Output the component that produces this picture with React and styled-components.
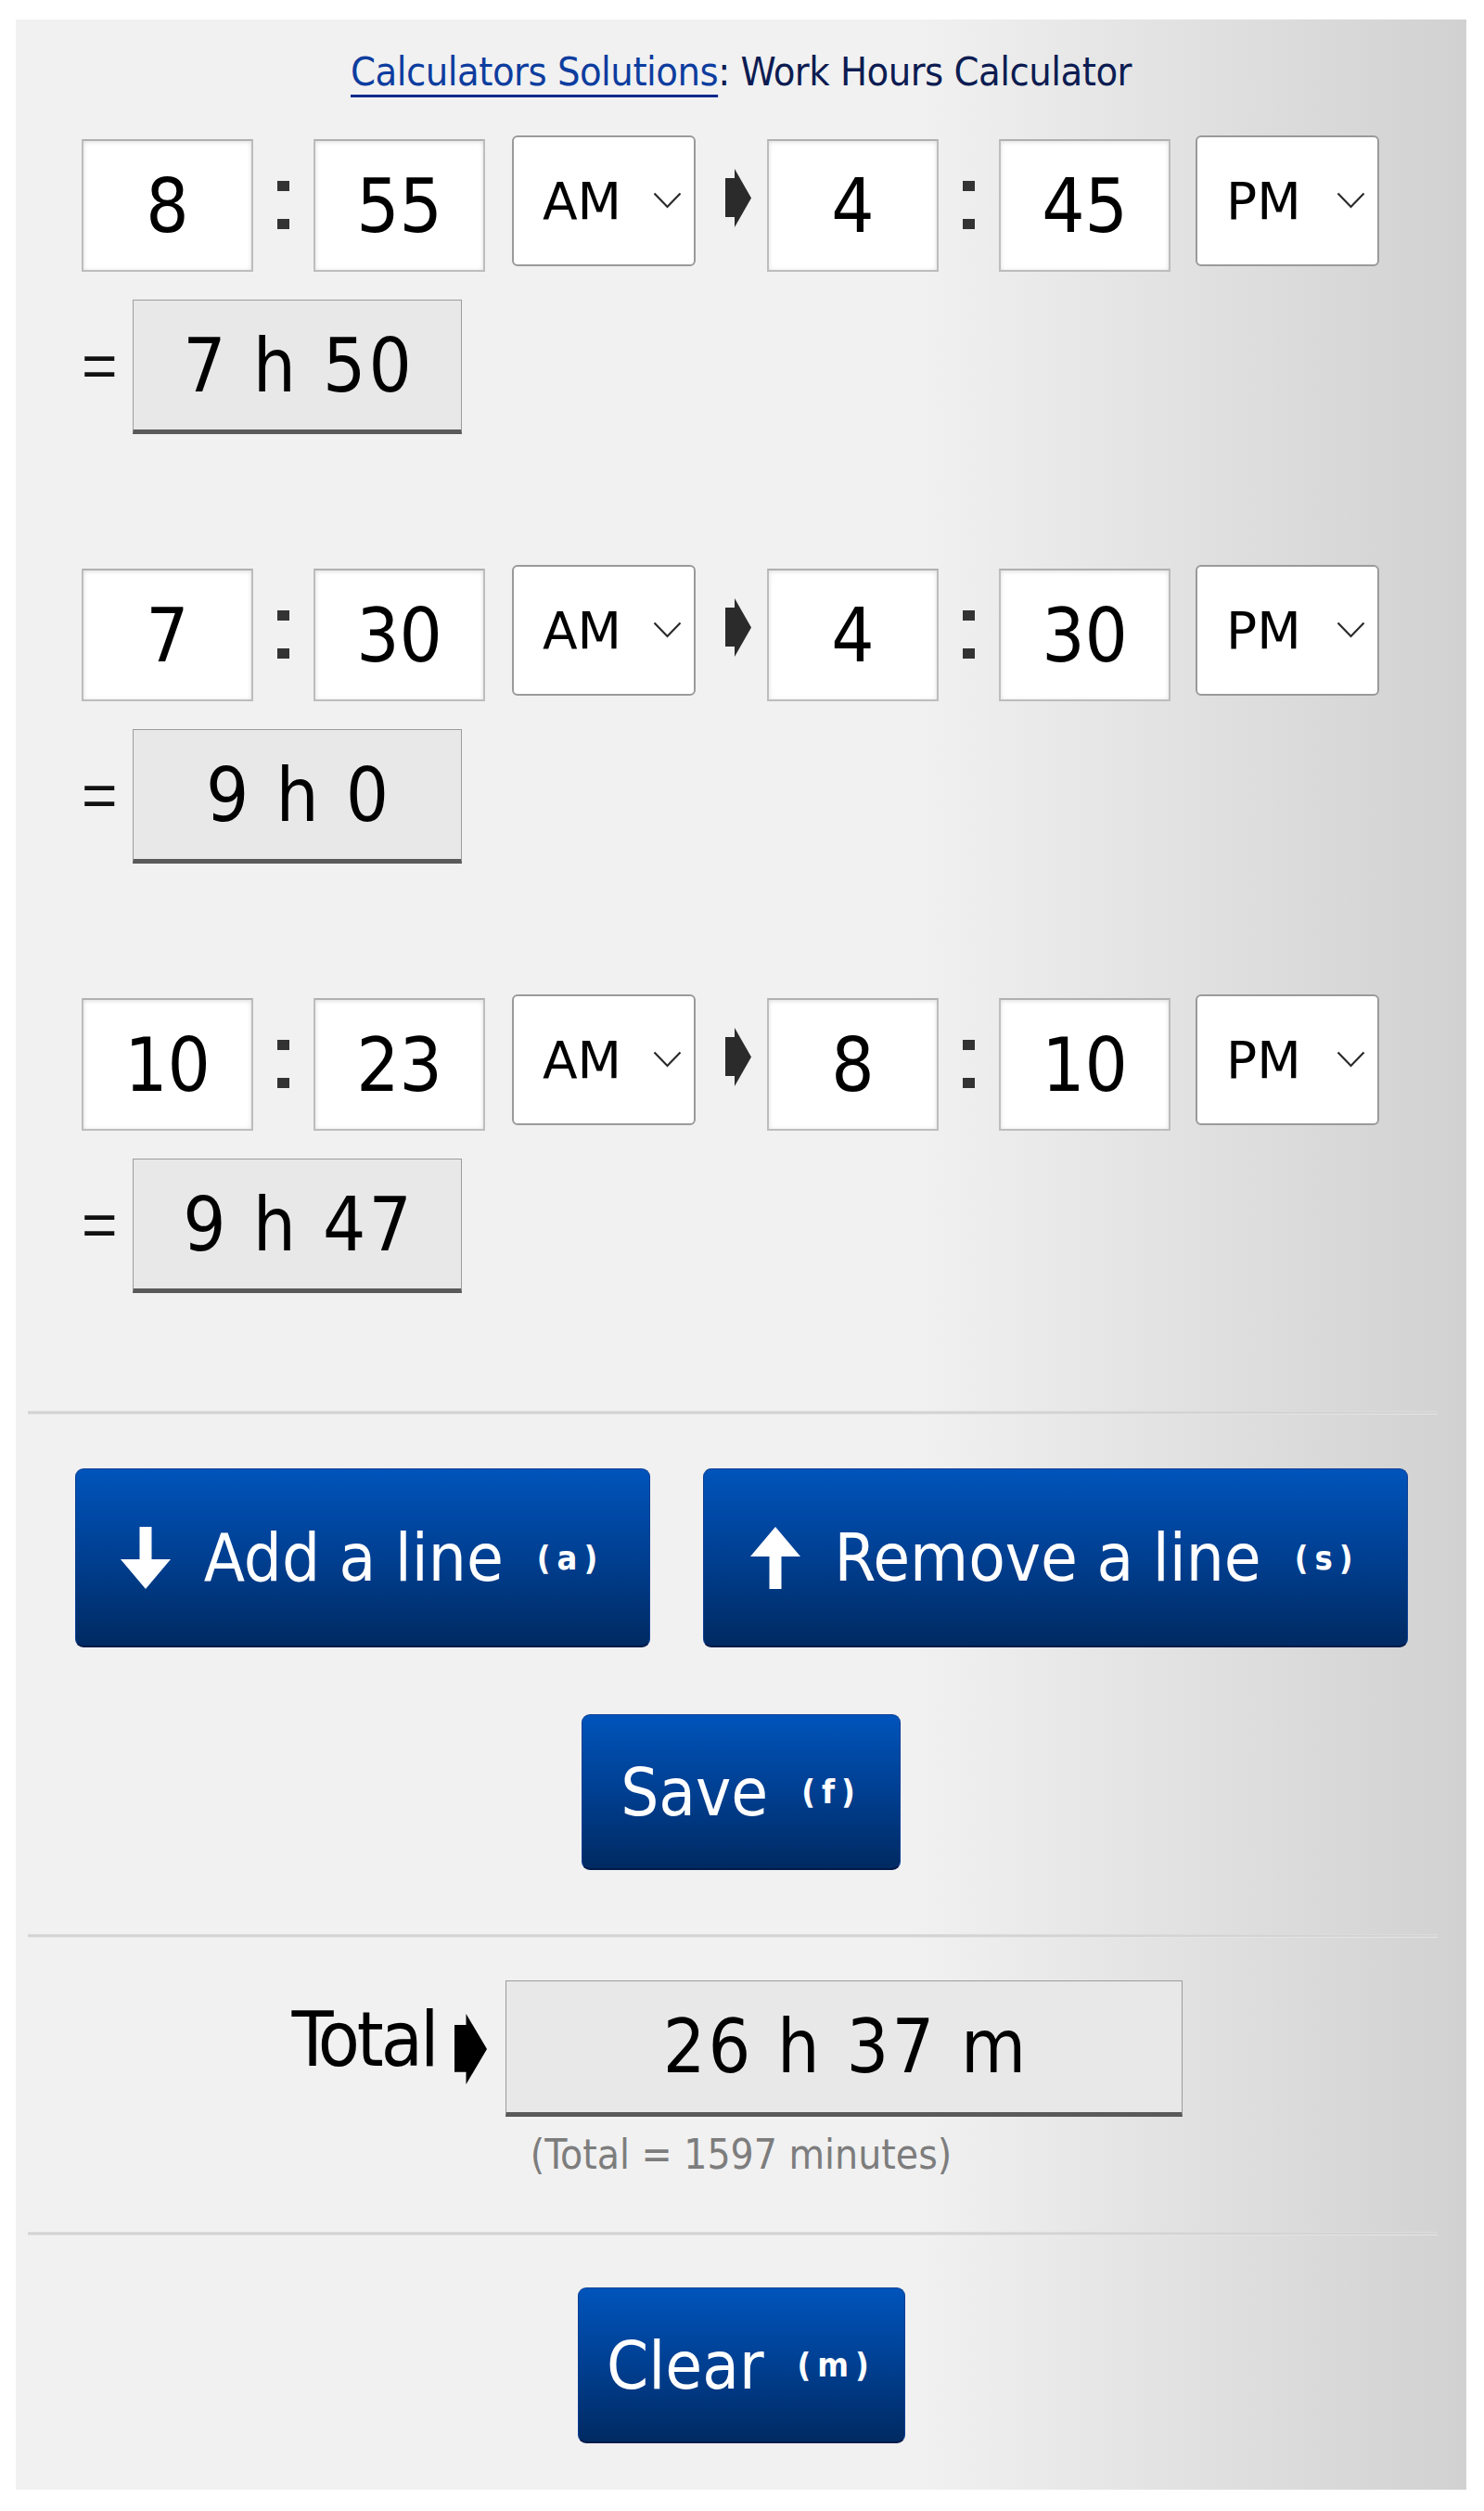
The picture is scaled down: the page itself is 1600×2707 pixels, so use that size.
import styled, { createGlobalStyle } from 'styled-components';

const techno = `"DejaVu Sans Condensed", "Liberation Sans", sans-serif`;

const GlobalStyle = createGlobalStyle`
    html, body {
        margin: 0;
        padding: 0;
        background: #ffffff;
    }
    * {
        box-sizing: border-box;
    }
`;

/* panel */
const Panel = styled.div`
    width: 1564px;
    margin: 21px 19px 23px 17px;
    padding: 29px 0 50px;
    background: linear-gradient(to right, #f1f1f1 0%, #f1f1f1 62%, #d1d1d1 100%);
    font-family: ${techno};
    color: #000;
`;
const Header = styled.div`
    text-align: center;
    font-size: 43px;
    line-height: 55px;
    letter-spacing: -0.5px;
    color: #0c1c52;
    margin-bottom: 45px;
`;
const HeaderLink = styled.a`
    color: #0d3d9f;
    text-decoration: underline;
    text-decoration-color: #0b2b8c;
    text-decoration-thickness: 3px;
    text-underline-offset: 10px;
`;

/* time lines */
const Lines = styled.div`
    padding-left: 71px;
`;
const TimeGroup = styled.div`
    margin-bottom: ${p => (p.$last ? '0' : '145px')};
`;
const TimeRow = styled.div`
    display: flex;
    align-items: flex-start;
    height: 143px;
`;
const TimeBox = styled.input`
    width: 185px;
    height: 143px;
    border: 2px solid #bdbdbd;
    border-top-color: #b0b0b0;
    box-shadow: inset 0 1px 5px rgba(0, 0, 0, 0.14);
    background: #ffffff;
    font-family: ${techno};
    font-size: 81px;
    padding: 0;
    text-align: center;
    color: #000;
    outline: none;
`;
const Colon = styled.div`
    width: 65px;
    height: 143px;
    display: flex;
    flex-direction: column;
    align-items: center;
    padding-top: 45px;
    gap: 30px;

    &::before, &::after {
        content: '';
        width: 13px;
        height: 11px;
        background: #333333;
    }
`;
const SelectWrap = styled.div`
    position: relative;
    width: 198px;
    height: 141px;
    margin-top: -4px;
    margin-left: ${p => p.$gap}px;
`;
const Select = styled.select`
    appearance: none;
    width: 100%;
    height: 100%;
    border: 2px solid #9a9a9a;
    border-radius: 6px;
    background: #ffffff;
    font-family: "DejaVu Sans", "Liberation Sans", sans-serif;
    font-size: 55px;
    color: #000;
    padding: 0 0 0 31px;
    outline: none;
`;
const Chevron = styled.svg`
    position: absolute;
    right: 15px;
    top: 61px;
    pointer-events: none;
`;
const ArrowMark = styled.svg`
    display: block;
    flex-shrink: 0;
    margin: ${p => p.$margin};
`;
const ResultRow = styled.div`
    display: flex;
    align-items: center;
    margin-top: 30px;
`;
const Equals = styled.div`
    width: 38px;
    margin-right: 17px;
    font-family: "Liberation Sans", sans-serif;
    font-size: 66px;
    line-height: 1;
    color: #111;
    text-align: center;
    margin-top: -4px;
`;
const ResultBox = styled.output`
    display: flex;
    align-items: center;
    justify-content: center;
    width: ${p => p.$width}px;
    height: ${p => p.$height}px;
    background: #e8e8e8;
    border: 1px solid #9c9c9c;
    border-bottom: 5px solid #5a5a5a;
    font-family: ${techno};
    font-size: ${p => p.$size}px;
    letter-spacing: 3px;
    padding-left: 3px;
    color: #000;
`;

const Divider = styled.div`
    height: 4px;
    margin: ${p => p.$top}px 31px 0 13px;
    background: #d3d3d3;
    border-top: 1px solid #dcdcdc;
    border-bottom: 1px solid #e4e4e4;
`;

/* buttons */
const ButtonRow = styled.div`
    display: flex;
    justify-content: center;
    gap: 57px;
    margin-top: ${p => p.$top}px;
`;
const BlueButton = styled.button`
    display: flex;
    align-items: center;
    justify-content: center;
    width: ${p => p.$width}px;
    height: ${p => p.$height}px;
    border: 1px solid #0a3f94;
    border-bottom: 2px solid #001a4a;
    border-radius: 9px;
    background: linear-gradient(to bottom, #0054bb 0%, #003f91 50%, #002a62 100%);
    color: #ffffff;
    font-family: ${techno};
    font-size: 72px;
    padding: 0;
    cursor: pointer;
`;
const ButtonIcon = styled.svg`
    margin-right: 36px;
    flex-shrink: 0;
`;
const KeyHint = styled.span`
    font-size: 36px;
    letter-spacing: 7px;
    margin-left: 36px;
    font-weight: bold;
`;

/* total */
const TotalRow = styled.div`
    display: flex;
    justify-content: center;
    align-items: center;
    margin-top: 46px;
    padding-right: 8px;
`;
const TotalLabel = styled.div`
    font-size: 82px;
    line-height: 1;
    letter-spacing: -3px;
    margin-top: -20px;
`;
const Minutes = styled.div`
    text-align: center;
    font-size: 44px;
    line-height: 52px;
    color: #7d7d7d;
    margin-top: 15px;
`;

const lines = [
    { h1: '8', m1: '55', p1: 'AM', h2: '4', m2: '45', p2: 'PM', result: '7 h 50' },
    { h1: '7', m1: '30', p1: 'AM', h2: '4', m2: '30', p2: 'PM', result: '9 h 0' },
    { h1: '10', m1: '23', p1: 'AM', h2: '8', m2: '10', p2: 'PM', result: '9 h 47' },
];

function Arrow({ width, height, margin, color }) {
    return (
        <ArrowMark width={width} height={height} viewBox="0 0 28 63" preserveAspectRatio="none" $margin={margin}>
            <polygon points="0,10 10,10 10,0 28,31.5 10,63 10,52 0,52" fill={color} />
        </ArrowMark>
    );
}

function PeriodSelect({ value, gap }) {
    return (
        <SelectWrap $gap={gap}>
            <Select defaultValue={value}>
                <option value="AM">AM</option>
                <option value="PM">PM</option>
            </Select>
            <Chevron width="31" height="18" viewBox="0 0 31 18">
                <polyline points="1.5,1.5 15.5,16 29.5,1.5" fill="none" stroke="#2a2a2a" strokeWidth="2.2" />
            </Chevron>
        </SelectWrap>
    );
}

function DownIcon({ up }) {
    return (
        <ButtonIcon width="54" height="67" viewBox="0 0 54 67">
            <polygon
                points="20.5,0 33.5,0 33.5,35 54,35 27,67 0,35 20.5,35"
                fill="#ffffff"
                transform={up ? 'rotate(180 27 33.5)' : undefined}
            />
        </ButtonIcon>
    );
}

export default function App() {
    return (
        <>
            <GlobalStyle />
            <Panel>
                <Header>
                    <HeaderLink href="#">Calculators Solutions</HeaderLink>: Work Hours Calculator
                </Header>

                <Lines>
                    {lines.map((line, i) => (
                        <TimeGroup key={i} $last={i === lines.length - 1}>
                            <TimeRow>
                                <TimeBox defaultValue={line.h1} />
                                <Colon />
                                <TimeBox defaultValue={line.m1} />
                                <PeriodSelect value={line.p1} gap={29} />
                                <Arrow width={28} height={63} margin="32px 17px 0 32px" color="#2b2b2b" />
                                <TimeBox defaultValue={line.h2} />
                                <Colon />
                                <TimeBox defaultValue={line.m2} />
                                <PeriodSelect value={line.p2} gap={27} />
                            </TimeRow>
                            <ResultRow>
                                <Equals>=</Equals>
                                <ResultBox $width={355} $height={145} $size={81}>{line.result}</ResultBox>
                            </ResultRow>
                        </TimeGroup>
                    ))}
                </Lines>

                <Divider $top={127} />

                <ButtonRow $top={58}>
                    <BlueButton $width={620} $height={193}>
                        <DownIcon />
                        Add a line<KeyHint>(a)</KeyHint>
                    </BlueButton>
                    <BlueButton $width={760} $height={193}>
                        <DownIcon up />
                        Remove a line<KeyHint>(s)</KeyHint>
                    </BlueButton>
                </ButtonRow>

                <ButtonRow $top={72}>
                    <BlueButton $width={344} $height={168}>
                        Save<KeyHint>(f)</KeyHint>
                    </BlueButton>
                </ButtonRow>

                <Divider $top={69} />

                <TotalRow>
                    <TotalLabel>Total</TotalLabel>
                    <Arrow width={35} height={76} margin="0 20px 0 20px" color="#000000" />
                    <ResultBox $width={730} $height={147} $size={80}>26 h 37 m</ResultBox>
                </TotalRow>
                <Minutes>(Total = 1597 minutes)</Minutes>

                <Divider $top={57} />

                <ButtonRow $top={56}>
                    <BlueButton $width={353} $height={168}>
                        Clear<KeyHint>(m)</KeyHint>
                    </BlueButton>
                </ButtonRow>
            </Panel>
        </>
    );
}
